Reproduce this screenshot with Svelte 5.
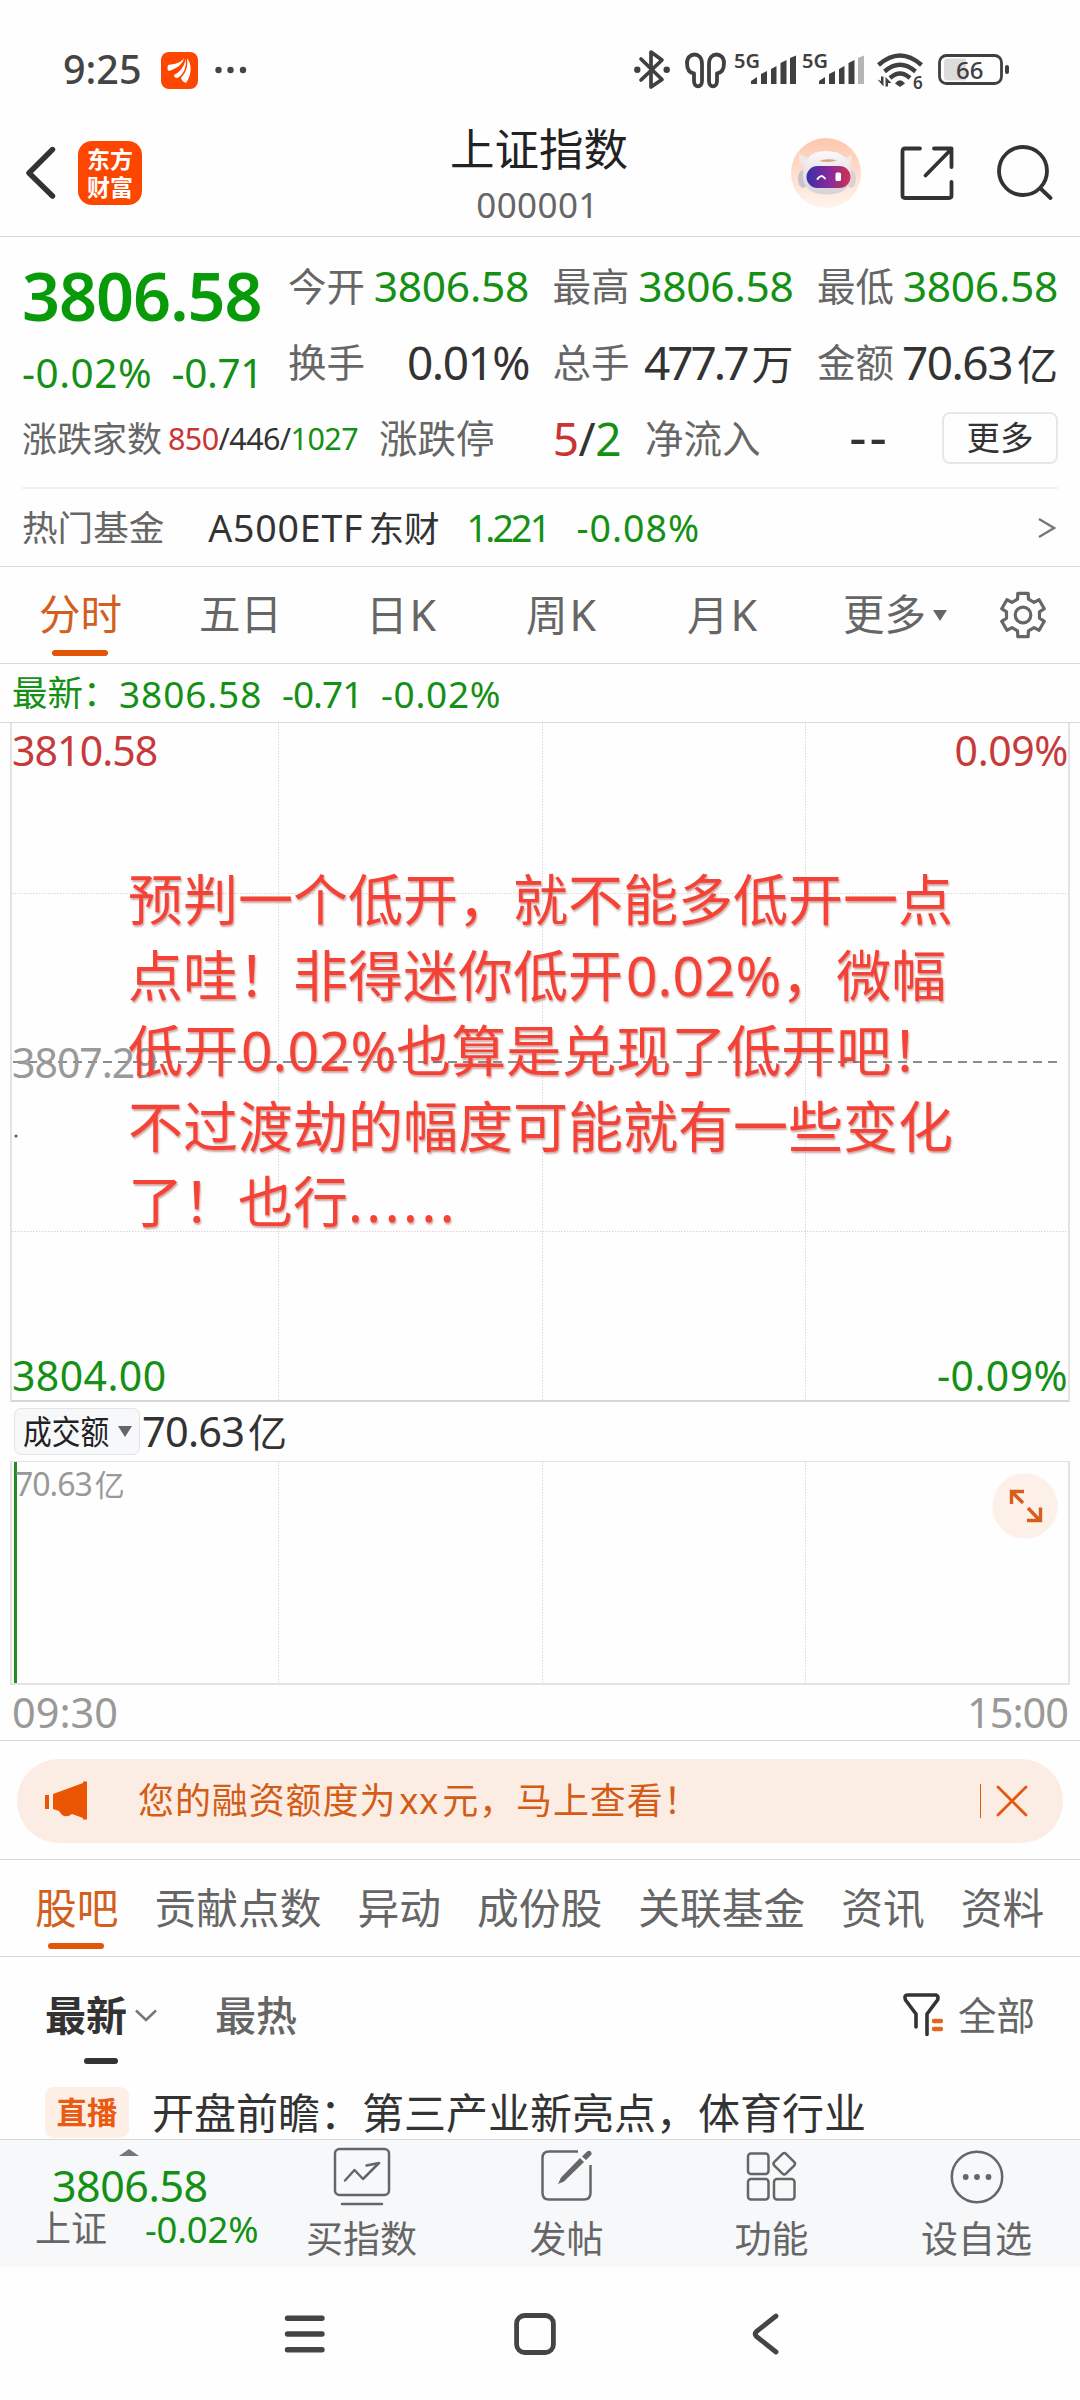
<script>
  const metrics = [
    { label: '今开', value: '3806.58', unit: '', cls: 'up' },
    { label: '最高', value: '3806.58', unit: '', cls: 'up' },
    { label: '最低', value: '3806.58', unit: '', cls: 'up' },
    { label: '换手', value: '0.01%', unit: '', cls: 'plain' },
    { label: '总手', value: '477.7', unit: '万', cls: 'plain tight' },
    { label: '金额', value: '70.63', unit: '亿', cls: 'plain snug' }
  ];

  const sections = ['股吧', '贡献点数', '异动', '成份股', '关联基金', '资讯', '资料'];

  const note = [
    [['预判一个低开，就不能多低开一点', '']],
    [['点哇！非得迷你低开', ''], ['0.02%', 'num'], ['，微幅', '']],
    [['低开', ''], ['0.02%', 'num'], ['也算是兑现了低开吧！', '']],
    [['不过渡劫的幅度可能就有一些变化', '']],
    [['了！也行', ''], ['......', 'dots']]
  ];

  // Six-toothed gear outline around the centre of a 48x48 box.
  function gearPath() {
    const pts = [];
    for (let k = 0; k < 6; k++) {
      const mid = -90 + 60 * k;
      for (const [r, a] of [[16.8, -19], [22.2, -13.5], [22.2, 13.5], [16.8, 19]]) {
        const t = ((mid + a) * Math.PI) / 180;
        pts.push((24 + r * Math.cos(t)).toFixed(2) + ' ' + (24 + r * Math.sin(t)).toFixed(2));
      }
    }
    return 'M' + pts.join('L') + 'Z';
  }
  const gear = gearPath();
</script>

<div class="screen">
  <div class="status">
    <span class="clock">9:25</span>
    <svg class="app" width="37" height="37" viewBox="0 0 37 37">
      <rect width="37" height="37" rx="8" fill="#fd4600" />
      <path d="M7 13C14 12 20 11 23 6C22 13 16 17 8 19C6 18 6.500 15 7 13Z" fill="#fff" />
      <path d="M13 23C19 20 24 14 24.500 6.500C28 12 24 22 16.500 26C14 26 13 25 13 23Z" fill="#fff" />
      <path d="M20 25C25 20 27 14 26 6.500C31 11 31 23 25 31C22 30 20 28 20 25Z" fill="#fff" />
      <path d="M9 19.500C16 17 22 13 23.800 7M17.500 27C24 22 26.500 14 25.300 7" fill="none" stroke="#fd4600" stroke-width="1.300" />
    </svg>
    <svg class="more-dots" width="32" height="8" viewBox="0 0 32 8" fill="#444">
      <circle cx="3.500" cy="4" r="3.200" /><circle cx="15.500" cy="4" r="3.200" /><circle cx="28" cy="4" r="3.200" />
    </svg>
    <svg class="radios" width="376" height="60" viewBox="634 40 376 60" fill="none" stroke="#404040">
      <path d="M641 59L662 79.500L651 87V52L662 60L641 80" stroke-width="3.700" stroke-linejoin="round" stroke-linecap="round" />
      <circle cx="637.300" cy="69.700" r="3.200" fill="#404040" stroke="none" /><circle cx="666.700" cy="69.700" r="3.200" fill="#404040" stroke="none" />
      <path d="M694 76V81C694 88 702 88 702 81V64C702 51 687 52 687 63C687 70 690 73 694 73.500Z" stroke-width="3.800" stroke-linejoin="round" />
      <path d="M717 76V81C717 88 709 88 709 81V64C709 51 724 52 724 63C724 70 721 73 717 73.500Z" stroke-width="3.800" stroke-linejoin="round" />
      <g class="gen" fill="#404040" stroke="none">
        <text x="734" y="67.500">5G</text>
        <text x="802" y="67.500">5G</text>
        <text class="six" x="913" y="88.500">6</text>
      </g>
      <g fill="#404040" stroke="none">
        <path d="M751 81L757 77V84H751ZM761 74L767 71V84H761ZM771 69L776.500 66V84H771ZM780.500 63L786.500 60V84H780.500ZM790 58L796 55.500V84H790Z" />
        <path d="M819 81L825 77V84H819ZM829 74L835 71V84H829ZM839 69L844.500 66V84H839ZM848.500 63L854.500 60V84H848.500Z" />
        <path d="M858 58L864 55.500V84H858Z" fill="#b5b5b5" />
        <path d="M895 83.500Q900 77 905 83.500L900 87Z" />
        <path d="M877.500 79.500L883.500 86.500V76.500H881V81ZM885.500 86.500V77L891.500 83H888V86.500Z" />
      </g>
      <path d="M878.500 65Q900 46 921.500 65" stroke-width="4.400" />
      <path d="M884.500 71.500Q900 58 915.500 71.500" stroke-width="4.400" />
      <path d="M890 78Q900 69 910 78" stroke-width="4.400" />
      <rect x="939.500" y="55.500" width="62" height="28" rx="7" stroke-width="2.800" />
      <path d="M947 58.500H966V80.500H947Q944 80.500 944 77V62Q944 58.500 947 58.500Z" fill="#dcdcdc" stroke="none" />
      <rect x="1005" y="65" width="4" height="9" rx="2" fill="#404040" stroke="none" />
      <text class="charge" x="956" y="79" fill="#404040" stroke="none">66</text>
    </svg>
  </div>

  <header>
    <div class="side">
      <svg width="32" height="54" viewBox="0 0 32 54" fill="none" stroke="#333" stroke-width="5.400" stroke-linecap="round" stroke-linejoin="round">
        <path d="M27.500 3.500L4 27L27.500 50" />
      </svg>
      <div class="logo"><span>东方</span><span>财富</span></div>
    </div>
    <div class="title">
      <h1>上证指数</h1>
      <p>000001</p>
    </div>
    <div class="side end">
      <svg width="70" height="70" viewBox="0 0 70 70">
        <defs>
          <linearGradient id="halo" x1="0" y1="0" x2="0" y2="1"><stop offset="0" stop-color="#fdc7ac" /><stop offset="1" stop-color="#fff4ee" /></linearGradient>
          <linearGradient id="visor" x1="0" y1="0" x2="1" y2="0"><stop offset="0" stop-color="#3b2fa8" /><stop offset=".55" stop-color="#8a2b98" /><stop offset="1" stop-color="#cf3350" /></linearGradient>
          <linearGradient id="shell" x1="0" y1="0" x2="0" y2="1"><stop offset="0" stop-color="#fbf9fa" /><stop offset="1" stop-color="#d5d1d8" /></linearGradient>
        </defs>
        <circle cx="35" cy="35" r="35" fill="url(#halo)" />
        <path d="M8 15Q12 19 17 19L12 29Q7 22 8 15ZM60 17Q57 20 52 19L58 29Q62 22 60 17Z" fill="#f1e8e8" />
        <ellipse cx="12" cy="41" rx="5" ry="9" fill="#c9c4cc" /><ellipse cx="60" cy="41" rx="5" ry="9" fill="#dcd2d6" />
        <path d="M12 38Q12 13 35 13Q60 13 60 38Q60 56 36 56.500Q12 56 12 38Z" fill="url(#shell)" />
        <path d="M28 23Q36 20 46 22.500Q37 25 28 23Z" fill="#d9a77d" />
        <rect x="15.500" y="28" width="44" height="22" rx="11" fill="url(#visor)" />
        <path d="M26.500 41Q30 35.500 34 40.500" fill="none" stroke="#fff" stroke-width="2" stroke-linecap="round" />
        <rect x="44.500" y="34.500" width="5.500" height="8.500" rx="1.500" fill="#fff" />
      </svg>
      <svg class="share" width="54" height="54" viewBox="0 0 54 54" fill="none" stroke="#333" stroke-width="3.800" stroke-linecap="round" stroke-linejoin="round">
        <path d="M20 2.500H5Q2.500 2.500 2.500 5V49.500Q2.500 52 5 52H49Q51.500 52 51.500 49.500V36M34 2.500H51.500V21M50 4.500L25.500 29.500" />
      </svg>
      <svg width="56" height="56" viewBox="0 0 56 56" fill="none" stroke="#333" stroke-width="3.800" stroke-linecap="round">
        <circle cx="26" cy="26" r="24" /><path d="M43.500 43.500L53.500 53" />
      </svg>
    </div>
  </header>

  <section class="quote">
    <div class="last">
      <strong>3806.58</strong>
      <div class="change"><span class="pct">-0.02%</span><span class="pts">-0.71</span></div>
    </div>
    <div class="metrics">
      {#each metrics as m}
        <div class="metric"><span class="label">{m.label}</span><span class="value {m.cls}">{m.value}{#if m.unit}<i>{m.unit}</i>{/if}</span></div>
      {/each}
    </div>
    <div class="breadth">
      <span class="label">涨跌家数</span>
      <span class="counts"><b class="red">850</b>/446/<b class="green">1027</b></span>
    </div>
    <div class="limits">
      <div class="limit"><span class="label">涨跌停</span><span class="value plain even"><b class="red">5</b>/<b class="green">2</b></span></div>
      <div class="inflow"><span class="label">净流入</span><span class="none">--</span></div>
      <button>更多</button>
    </div>
  </section>

  <div class="fund">
    <span class="label">热门基金</span>
    <span class="name"><b>A500ETF</b>东财</span>
    <span class="price">1.221</span>
    <span class="rate">-0.08%</span>
    <svg width="18" height="22" viewBox="0 0 18 22" fill="none" stroke="#777" stroke-width="2.300"><path d="M1 2L16 11L1 20" /></svg>
  </div>

  <nav class="periods">
    <span class="on">分时</span>
    <span>五日</span>
    <span>日<b>K</b></span>
    <span>周<b>K</b></span>
    <span>月<b>K</b></span>
    <span class="menu">更多<i class="tri"></i></span>
    <svg width="48" height="48" viewBox="0 0 48 48" fill="none" stroke="#666" stroke-width="3.200" stroke-linejoin="round">
      <path d={gear} /><circle cx="24" cy="24" r="7.800" />
    </svg>
  </nav>

  <div class="latest"><span class="tag">最新：</span><span class="a">3806.58</span><span class="b">-0.71</span><span class="c">-0.02%</span></div>

  <div class="chart">
    <svg class="grid" width="1060" height="677" viewBox="10 723 1060 677" fill="none">
      <path d="M278.500 723V1400M542.500 723V1400M805.500 723V1400M12 893.500H1068M12 1231.500H1068" stroke="#d8d8d8" stroke-dasharray="1.500 1.500" />
      <path d="M13 1062H1062" stroke="#8c8c8c" stroke-width="2" stroke-dasharray="9 6" />
      <circle cx="16" cy="1136" r="1.500" fill="#555" />
    </svg>
    <span class="mark tl">3810.58</span>
    <span class="mark tr">0.09%</span>
    <span class="mark ml">3807.29</span>
    <span class="mark bl">3804.00</span>
    <span class="mark br">-0.09%</span>
    <div class="note">
      {#each note as line}
        <p>{#each line as part}<span class={part[1]}>{part[0]}</span>{/each}</p>
      {/each}
    </div>
  </div>

  <div class="turnover">
    <div class="pick"><span>成交额</span><i class="tri"></i></div>
    <span class="amount">70.63<i>亿</i></span>
  </div>

  <div class="volume">
    <svg class="grid" width="1060" height="221" viewBox="10 1462 1060 221" fill="none">
      <path d="M278.500 1462V1683M542.500 1462V1683M805.500 1462V1683" stroke="#d8d8d8" stroke-dasharray="1.500 1.500" />
      <path d="M15.500 1462V1683" stroke="#238c23" stroke-width="3" />
    </svg>
    <span class="peak">70.63<i>亿</i></span>
    <svg class="expand" width="66" height="66" viewBox="0 0 66 66">
      <circle cx="33" cy="33" r="32.700" fill="#fdf0e9" />
      <path d="M19.500 31V18.500H32M19.500 18.500L31 30M36 35L47 46.500M35 47.500H48.500V34.500" fill="none" stroke="#d65f1c" stroke-width="3.400" />
    </svg>
  </div>

  <div class="hours"><span>09:30</span><span class="close">15:00</span></div>

  <div class="promo">
    <div class="pill">
      <svg width="44" height="40" viewBox="0 0 44 40" fill="#ea5504">
        <path d="M0 14H4V28H0ZM8 13L38 2V0.500H42V38.500H38V37L27 33Q22 37 17 34L14 30L8 28Z" />
      </svg>
      <span class="msg">您的融资额度为<b>xx</b>元，马上查看！</span>
      <i class="bar"></i>
      <svg width="32" height="32" viewBox="0 0 32 32" stroke="#e2590f" stroke-width="2.800" stroke-linecap="round"><path d="M2 2L30 30M30 2L2 30" /></svg>
    </div>
  </div>

  <nav class="sections">
    {#each sections as s, i}<span class:on={i === 0}>{s}</span>{/each}
  </nav>

  <div class="sort">
    <span class="new">最新</span>
    <svg class="down" width="22" height="13" viewBox="0 0 22 13" fill="none" stroke="#777" stroke-width="2.600"><path d="M1 1.500L11 11L21 1.500" /></svg>
    <span class="hot">最热</span>
    <svg class="filter" width="42" height="44" viewBox="0 0 42 44" fill="none" stroke="#333" stroke-width="3.600" stroke-linecap="round" stroke-linejoin="round">
      <path d="M13 34V21L2.500 7Q1 2 4 2H33Q36 3 34.500 7L24 21V41.500" />
      <path d="M31 28H38M31 36H38" stroke="#e2661f" stroke-width="4.400" />
    </svg>
    <span class="all">全部</span>
  </div>

  <div class="post"><em>直播</em><span>开盘前瞻：第三产业新亮点，体育行业</span></div>

  <footer>
    <div class="index">
      <svg width="20" height="7" viewBox="0 0 20 7"><path d="M0 7L10 0L20 7Z" fill="#777" /></svg>
      <span class="pt">3806.58</span>
      <div class="row"><span class="label">上证</span><span class="pc">-0.02%</span></div>
    </div>
    <div class="act">
      <svg width="60" height="62" viewBox="0 0 60 62" fill="none" stroke="#666" stroke-width="2.500" stroke-linecap="round" stroke-linejoin="round">
        <rect x="3" y="3" width="54" height="46" rx="4.500" /><path d="M13 34.500L22.500 24L31 33L47 17M34.500 19.500L47 17L43 21M10 58H50" />
      </svg>
      <span>买指数</span>
    </div>
    <div class="act">
      <svg width="60" height="62" viewBox="0 0 60 62" fill="none" stroke="#666" stroke-width="2.500">
        <path d="M41 5.500H12Q5.500 5.500 5.500 12V47Q5.500 53.500 12 53.500H47Q53.500 53.500 53.500 47V19" />
        <path d="M21 38L24 31.500L43 12L47 16L27 35.500ZM45 10.500L50 5.500Q53 4 54 6Q55.500 8 53.500 9.500L49 14Z" fill="#666" stroke="none" />
      </svg>
      <span>发帖</span>
    </div>
    <div class="act">
      <svg width="60" height="62" viewBox="0 0 60 62" fill="none" stroke="#666" stroke-width="2.500" stroke-linejoin="round">
        <rect x="6" y="7.500" width="20.500" height="20.500" rx="3" /><rect x="6" y="33" width="20.500" height="20.500" rx="3" /><rect x="32" y="33" width="20.500" height="20.500" rx="3" />
        <rect x="34" y="9.500" width="16.500" height="16.500" rx="2.500" transform="rotate(45 42.250 17.750)" />
      </svg>
      <span>功能</span>
    </div>
    <div class="act">
      <svg width="60" height="62" viewBox="0 0 60 62" fill="none" stroke="#666" stroke-width="2.500">
        <circle cx="30" cy="31" r="25.200" /><g fill="#666" stroke="none"><circle cx="18.700" cy="31" r="2.900" /><circle cx="30" cy="31" r="2.900" /><circle cx="41.500" cy="31" r="2.900" /></g>
      </svg>
      <span>设自选</span>
    </div>
  </footer>

  <div class="system">
    <svg width="42" height="44" viewBox="0 0 42 44" stroke="#444" stroke-width="5.400" stroke-linecap="round"><path d="M3.500 6.300H38M3.500 22H38M3.500 37.700H38" /></svg>
    <svg class="home" width="42" height="44" viewBox="0 0 42 44" fill="none" stroke="#444" stroke-width="4.800"><rect x="2.600" y="3.500" width="36.800" height="37" rx="8" /></svg>
    <svg class="back" width="28" height="44" viewBox="0 0 28 44" fill="none" stroke="#444" stroke-width="4.800" stroke-linecap="round" stroke-linejoin="round"><path d="M24 4L4.500 19.500Q2 22 4.500 24.500L24 40" /></svg>
  </div>
</div>

<style>
  :global(body) {
    margin: 0;
    background: #fefefe;
  }
  .screen {
    width: 1080px;
    height: 2400px;
    overflow: hidden;
    display: flex;
    flex-direction: column;
    background: #fefefe;
    color: #333;
    font-family: 'Noto Sans', 'Noto Sans CJK SC', sans-serif;
    line-height: 1;
    white-space: nowrap;
  }
  .screen > * {
    box-sizing: border-box;
    flex: none;
  }
  svg {
    display: block;
    flex: none;
  }
  h1,
  p {
    margin: 0;
    font-weight: 400;
  }
  b,
  i,
  em {
    font-weight: inherit;
    font-style: normal;
  }
  .red {
    color: #c93434;
  }
  .green {
    color: #149014;
  }
  .label {
    color: #666;
  }

  .status {
    height: 112px;
    padding: 28px 70px 0 63px;
    display: flex;
    align-items: center;
  }
  .clock {
    width: 98px;
    font-size: 39.5px;
    font-weight: 500;
    color: #444;
  }
  .more-dots {
    margin-left: 17px;
  }
  .radios {
    margin-left: auto;
  }
  .gen {
    font-size: 20px;
    font-weight: 600;
  }
  .six {
    font-size: 17px;
  }
  .charge {
    font-size: 24px;
    font-weight: 500;
  }

  header {
    height: 125px;
    padding: 0 27px 2px 25px;
    border-bottom: 1px solid #d5d5d5;
    display: grid;
    grid-template-columns: 1fr auto 1fr;
    align-items: center;
  }
  .side {
    display: flex;
    align-items: center;
  }
  .end {
    justify-content: flex-end;
  }
  .share {
    margin: 0 43px 0 39px;
  }
  .logo {
    width: 64px;
    height: 64px;
    margin-left: 21px;
    border-radius: 14px;
    background: #fd4600;
    color: #fff;
    display: flex;
    flex-direction: column;
    align-items: center;
    justify-content: center;
    font-size: 23px;
    font-weight: 700;
    line-height: 28px;
  }
  .title {
    margin: 8px 0 0 0;
    text-align: center;
    line-height: 56px;
  }
  h1 {
    font-size: 44.5px;
    color: #222;
  }
  .title p {
    font-size: 35px;
    letter-spacing: 0.4px;
    margin-left: -3px;
    color: #666;
  }

  .quote {
    height: 252px;
    margin: 0 22px;
    padding-top: 11px;
    border-bottom: 2px solid #f0f1f1;
    display: grid;
    grid-template-columns: 266px 1fr;
    grid-template-rows: 152px 76px;
  }
  .last {
    color: #149014;
  }
  .last strong {
    display: block;
    font-size: 66.5px;
    font-weight: 600;
    line-height: 95px;
    letter-spacing: -1px;
    color: #089a08;
  }
  .change {
    display: flex;
    justify-content: space-between;
    width: 241px;
    font-size: 40.5px;
    line-height: 59px;
  }
  .pct {
    letter-spacing: 0.5px;
  }
  .pts {
    letter-spacing: -0.4px;
  }
  .metrics {
    display: grid;
    grid-template-columns: repeat(3, 241px);
    grid-template-rows: 76px 76px;
    column-gap: 23.5px;
  }
  .metric,
  .limit,
  .inflow {
    display: flex;
    align-items: center;
    justify-content: space-between;
    font-size: 38.5px;
  }
  .up {
    font-size: 42.5px;
    color: #149014;
    letter-spacing: -0.3px;
  }
  .plain {
    font-size: 46px;
    letter-spacing: -1.5px;
  }
  .tight {
    letter-spacing: -3px;
  }
  .value i {
    margin-left: 5px;
    font-size: 42px;
    letter-spacing: 0;
  }
  .snug i {
    font-size: 41px;
  }
  .even {
    letter-spacing: -0.5px;
  }
  .breadth {
    display: flex;
    align-items: center;
    font-size: 35px;
  }
  .counts {
    margin-left: 6px;
    font-size: 30.5px;
    letter-spacing: -0.6px;
  }
  .limits {
    display: flex;
    align-items: center;
    margin-left: 91px;
  }
  .limit {
    width: 242px;
  }
  .inflow {
    width: 241px;
    margin-left: 24px;
  }
  .none {
    font-size: 54px;
    line-height: 46px;
    letter-spacing: 3px;
    margin: -5px -4px 0 0;
  }
  button {
    width: 116px;
    height: 52px;
    margin-left: auto;
    padding: 0;
    border: 2px solid #e6e8e8;
    border-radius: 8px;
    background: none;
    font-family: inherit;
    font-size: 33.5px;
    line-height: 1;
    color: #333;
  }

  .fund {
    height: 78px;
    padding: 0 24px 0 22px;
    border-bottom: 1px solid #d5dada;
    display: flex;
    align-items: center;
    font-size: 35.6px;
  }
  .fund .name {
    margin-left: 44px;
  }
  .name b {
    font-size: 37.5px;
    letter-spacing: 0.8px;
    margin-right: 5px;
  }
  .price,
  .rate {
    font-size: 37.5px;
    color: #149014;
  }
  .price {
    margin-left: 27px;
    letter-spacing: -2.8px;
  }
  .rate {
    margin-left: 28px;
    letter-spacing: 1px;
  }
  .fund svg {
    margin-left: auto;
  }

  .periods {
    height: 97px;
    padding-left: 39px;
    border-bottom: 1px solid #d5dada;
    display: grid;
    grid-template-columns: 160px 167px 160px 161px 156px 156px 48px;
    align-items: center;
    font-size: 41.5px;
    color: #666;
  }
  .periods b {
    margin-left: 2px;
    font-size: 43px;
  }
  .on {
    position: relative;
    color: #d2601c;
  }
  .on::after {
    content: '';
    position: absolute;
    left: 13px;
    top: 56px;
    width: 56px;
    height: 6px;
    border-radius: 3px;
    background: #e25608;
  }
  .menu {
    display: flex;
    align-items: center;
  }
  .tri {
    border: 7px solid transparent;
    border-top: 11px solid #666;
    border-bottom: 0;
  }
  .menu .tri {
    margin-left: 7px;
  }

  .latest {
    height: 59px;
    padding-left: 12px;
    border-bottom: 1px solid #d5dada;
    display: flex;
    align-items: center;
    font-size: 37px;
    color: #149014;
  }
  .tag {
    width: 107px;
    font-size: 35.5px;
  }
  .a {
    letter-spacing: 0.9px;
    width: 163px;
  }
  .b {
    letter-spacing: -1px;
    width: 99px;
  }
  .c {
    letter-spacing: 0.7px;
  }

  .chart,
  .volume {
    position: relative;
    margin: 0 10px;
    border: solid #e3e3e3;
    border-width: 0 2px;
  }
  .chart {
    height: 679px;
    border-bottom: 2px solid #d6d6d6;
  }
  .grid {
    margin-left: -2px;
  }
  .mark {
    position: absolute;
    font-size: 41px;
    line-height: 42px;
  }
  .tl,
  .tr {
    top: 6px;
    color: #c63a3a;
  }
  .tl {
    letter-spacing: -0.9px;
  }
  .tr {
    letter-spacing: -0.4px;
  }
  .tl,
  .ml,
  .bl {
    left: 0;
  }
  .tr,
  .br {
    right: 0;
  }
  .ml {
    top: 318px;
    color: #999;
    letter-spacing: -1px;
  }
  .bl,
  .br {
    bottom: 4px;
    color: #149014;
    letter-spacing: 0.4px;
  }
  .note {
    position: absolute;
    left: 116px;
    top: 138px;
    font-size: 55px;
    font-weight: 500;
    line-height: 75.5px;
    color: #f44336;
    text-shadow: 1px 2px 2px rgba(150, 60, 50, 0.45);
  }
  .num {
    margin-left: 3px;
    letter-spacing: 0.1px;
  }
  .dots {
    letter-spacing: 3.6px;
  }

  .turnover {
    height: 59px;
    padding-left: 14px;
    display: flex;
    align-items: center;
  }
  .pick {
    box-sizing: border-box;
    width: 126px;
    height: 47px;
    padding-left: 8px;
    border: 1px solid #e1e4e6;
    border-radius: 7px;
    background: #f6f8fa;
    display: flex;
    align-items: center;
  }
  .pick span {
    width: 95px;
    font-size: 33px;
    color: #222;
    transform: scaleX(0.87);
    transform-origin: left;
  }
  .amount {
    margin-left: 2px;
    font-size: 41.5px;
    letter-spacing: -0.8px;
  }
  .amount i {
    font-size: 39px;
    margin-left: 4px;
  }

  .volume {
    height: 224px;
    border-width: 1px 2px 2px;
  }
  .peak {
    position: absolute;
    left: 3px;
    top: 6px;
    font-size: 32px;
    letter-spacing: -1px;
    color: #999;
  }
  .peak i {
    font-size: 30px;
    margin-left: 3px;
  }
  .expand {
    position: absolute;
    right: 10px;
    top: 11px;
  }
  .hours {
    height: 56px;
    padding: 0 12px;
    border-bottom: 1px solid #d5d5d5;
    display: flex;
    align-items: center;
    justify-content: space-between;
    font-size: 41.5px;
    color: #999;
  }
  .close {
    letter-spacing: -1px;
  }

  .promo {
    height: 119px;
    padding: 18px 17px 0;
    border-bottom: 1px solid #d5d5d5;
  }
  .pill {
    box-sizing: border-box;
    height: 84px;
    padding: 0 35px 0 28px;
    border-radius: 42px;
    background: #fcede4;
    display: flex;
    align-items: center;
    font-size: 36px;
    letter-spacing: 0.9px;
    color: #d35c17;
  }
  .msg {
    margin-left: 49px;
  }
  .msg b {
    margin: 0 3px;
  }
  .bar {
    width: 1px;
    height: 34px;
    margin: 0 15px 0 auto;
    background: #e2590f;
  }

  .sections {
    height: 97px;
    padding-left: 35px;
    border-bottom: 1px solid #d5d5d5;
    display: flex;
    align-items: center;
    gap: 36px;
    font-size: 41.75px;
    color: #666;
  }

  .sort {
    height: 116px;
    padding: 0 45px 0 45px;
    display: flex;
    align-items: center;
    font-size: 41px;
    color: #666;
  }
  .new {
    position: relative;
    font-weight: 700;
    color: #333;
  }
  .new::after {
    content: '';
    position: absolute;
    left: 39px;
    top: 63px;
    width: 34px;
    height: 6px;
    border-radius: 3px;
    background: #333;
  }
  .down {
    margin-left: 8px;
  }
  .hot {
    margin-left: 58px;
    font-weight: 500;
  }
  .filter {
    margin-left: auto;
  }
  .all {
    margin-left: 13px;
    font-size: 38.5px;
  }

  .post {
    height: 67px;
    padding: 14px 0 0 45px;
    border-bottom: 1px solid #d5d5d5;
    display: flex;
    font-size: 42px;
    line-height: 51px;
  }
  em {
    width: 84px;
    height: 51px;
    margin-right: 23px;
    border-radius: 9px;
    background: #fdeee6;
    color: #ea5a10;
    text-align: center;
    font-size: 30.5px;
    font-weight: 700;
  }

  footer {
    height: 127px;
    background: #f7f8fa;
    display: grid;
    grid-template-columns: 259px repeat(4, 205px);
  }
  .index {
    padding: 9px 0 0 35px;
    color: #149014;
  }
  .index svg {
    margin-left: 84px;
  }
  .pt {
    display: block;
    margin: 8px 0 0 17px;
    font-size: 43px;
    line-height: 44px;
    letter-spacing: -0.5px;
  }
  .row {
    margin-top: 2px;
    display: flex;
    align-items: center;
    font-size: 36px;
    line-height: 38px;
  }
  .pc {
    margin-left: 38px;
    font-size: 36.5px;
    letter-spacing: -0.2px;
  }
  .act {
    padding-top: 6px;
    display: flex;
    flex-direction: column;
    align-items: center;
    font-size: 37px;
    line-height: 62px;
    color: #666;
  }

  .system {
    height: 133px;
    display: flex;
    align-items: center;
    padding-left: 284px;
  }
  .home {
    margin-left: 188px;
  }
  .back {
    margin-left: 196px;
  }
</style>
